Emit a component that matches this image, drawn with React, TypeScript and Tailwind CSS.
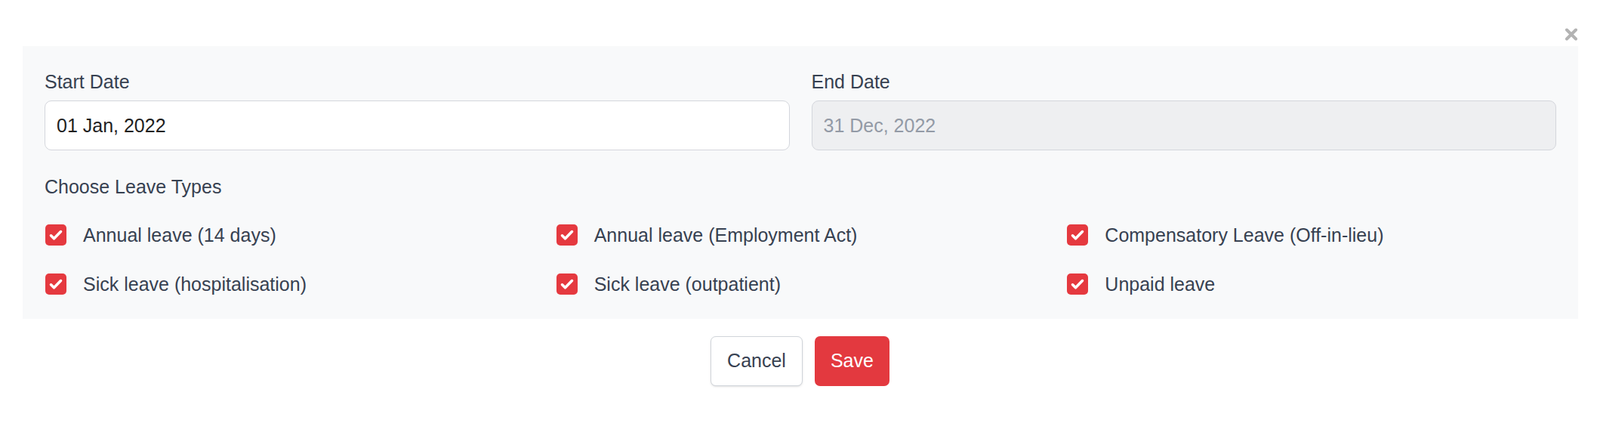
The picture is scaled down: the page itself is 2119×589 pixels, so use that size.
import React from "react";

const leaveTypes = [
  "Annual leave (14 days)",
  "Annual leave (Employment Act)",
  "Compensatory Leave (Off-in-lieu)",
  "Sick leave (hospitalisation)",
  "Sick leave (outpatient)",
  "Unpaid leave",
];

const labelCls = "block text-[25px] leading-[36px] text-[#374151]";
const inputCls = "w-full h-[66px] rounded-[9px] border border-[#d4d6dc] px-[15px] text-[25px] outline-none";

function CheckItem({ label }: { label: string }) {
  return (
    <label className="flex items-center h-[36px] gap-[22px]">
      <span className="w-[28px] h-[28px] rounded-[5px] bg-[#e5393f] shrink-0">
        <svg width="28" height="28" viewBox="0 0 28 28" fill="none">
          <path d="M7.5 14.8l4 4L20.5 9.6" stroke="#fff" strokeWidth="3.6" strokeLinecap="round" strokeLinejoin="round" />
        </svg>
      </span>
      <span className="text-[25px] leading-[36px] text-[#374151]">{label}</span>
    </label>
  );
}

export default function App() {
  return (
    <div className="min-h-[589px] bg-white pl-[30px] pr-[29px] pt-[37px]" style={{ fontFamily: '"Liberation Sans", Arial, sans-serif' }}>
      <div className="flex justify-end h-[17px]">
        <svg width="18" height="17" viewBox="0 0 18 17">
          <path d="M3 2.5l12 12M15 2.5l-12 12" stroke="#b3b3b3" strokeWidth="4" strokeLinecap="round" />
        </svg>
      </div>

      <div className="mt-[7px] bg-[#f8f9fa] px-[29px] pt-[29px] pb-[28px]">
        <div className="grid grid-cols-2 gap-x-[29px]">
          <div>
            <span className={labelCls}>Start Date</span>
            <input readOnly value="01 Jan, 2022" className={`${inputCls} mt-[7px] bg-white text-[#1f1f1f]`} />
          </div>
          <div>
            <span className={labelCls}>End Date</span>
            <input readOnly disabled value="31 Dec, 2022" className={`${inputCls} mt-[7px] bg-[#eeeff1] text-[#939aa6]`} />
          </div>
        </div>

        <span className={`${labelCls} mt-[30px]`}>Choose Leave Types</span>

        <div className="grid grid-cols-3 gap-x-[29px] gap-y-[29px] mt-[28px] pl-[1px]">
          {leaveTypes.map(t => <CheckItem key={t} label={t} />)}
        </div>
      </div>

      <div className="flex justify-center gap-[16px] mt-[23px] pr-[1px]">
        <button type="button" className="h-[66px] px-[21px] rounded-[7px] border border-[#d1d5db] bg-white text-[25px] text-[#374151] shadow-sm">
          Cancel
        </button>
        <button type="button" className="h-[66px] px-[21px] rounded-[7px] bg-[#e3393f] text-[25px] text-white">
          Save
        </button>
      </div>
    </div>
  );
}
